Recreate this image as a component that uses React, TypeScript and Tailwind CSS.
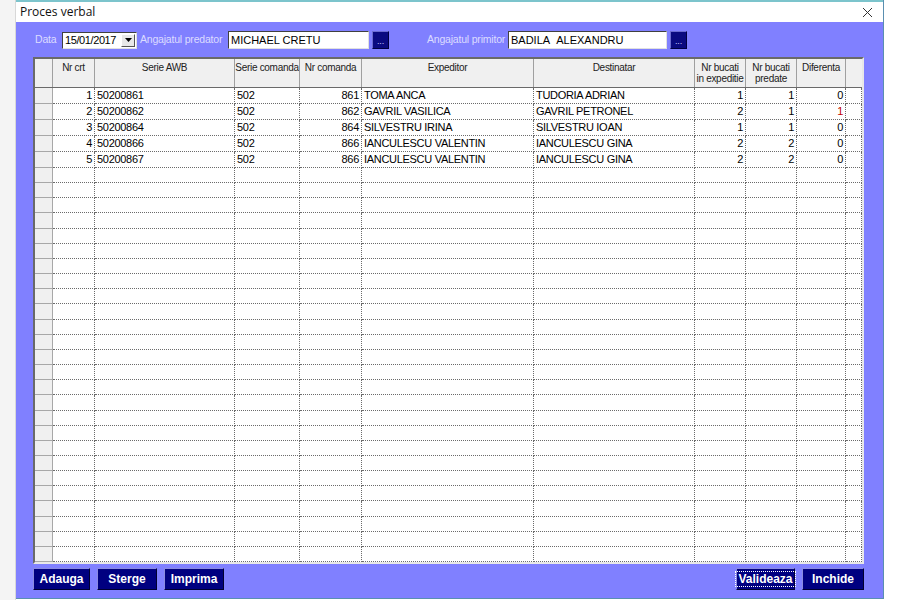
import React from "react";

type Row = {
  nr: number;
  awb: string;
  serie: string;
  cmd: string;
  exp: string;
  dest: string;
  bucExp: string;
  bucPred: string;
  dif: string;
};

const rows: Row[] = [
  { nr: 1, awb: "50200861", serie: "502", cmd: "861", exp: "TOMA ANCA", dest: "TUDORIA ADRIAN", bucExp: "1", bucPred: "1", dif: "0" },
  { nr: 2, awb: "50200862", serie: "502", cmd: "862", exp: "GAVRIL VASILICA", dest: "GAVRIL PETRONEL", bucExp: "2", bucPred: "1", dif: "1" },
  { nr: 3, awb: "50200864", serie: "502", cmd: "864", exp: "SILVESTRU IRINA", dest: "SILVESTRU IOAN", bucExp: "1", bucPred: "1", dif: "0" },
  { nr: 4, awb: "50200866", serie: "502", cmd: "866", exp: "IANCULESCU VALENTIN", dest: "IANCULESCU GINA", bucExp: "2", bucPred: "2", dif: "0" },
  { nr: 5, awb: "50200867", serie: "502", cmd: "866", exp: "IANCULESCU VALENTIN", dest: "IANCULESCU GINA", bucExp: "2", bucPred: "2", dif: "0" },
];

const TOTAL_ROWS = 31;

const cell =
  "h-full border-r border-b border-dotted border-[#6b6b6b] px-[2px] whitespace-nowrap overflow-hidden leading-[15px] tracking-[-0.3px]";

function HeaderCell({ w, children }: { w: string; children?: React.ReactNode }) {
  return (
    <div
      className={`${w} h-full shrink-0 overflow-hidden whitespace-nowrap border-r border-[#a0a0a0] bg-[#f0f0f0] pt-[3px] text-center text-[10px] leading-[11px] tracking-[-0.3px] text-[#222]`}
    >
      {children}
    </div>
  );
}

function DotsButton() {
  return (
    <div className="ml-[3px] flex h-[18px] w-[17px] items-end justify-center border border-t-[#6b6bd0] border-l-[#6b6bd0] border-r-[#000040] border-b-[#000040] bg-[#0a0a80] pb-[2px] text-[9px] leading-[9px] text-[#c8c8ff]">
      ...
    </div>
  );
}

function NavyButton({ label, w, focused }: { label: string; w: string; focused?: boolean }) {
  return (
    <div
      className={`${w} flex h-[22px] items-center justify-center border border-t-[#8a8ae0] border-l-[#8a8ae0] border-r-[#000030] border-b-[#000030] bg-[#000080] text-[12px] font-bold text-white`}
    >
      {focused ? (
        <span className="border border-dotted border-white px-[2px] leading-[14px]">{label}</span>
      ) : (
        label
      )}
    </div>
  );
}

export default function App() {
  const font = { fontFamily: '"Liberation Sans", Arial, sans-serif' };
  return (
    <div className="flex h-[600px] w-[900px] overflow-hidden bg-white" style={font}>
      {/* desktop edge behind the dialog */}
      <div className="h-full w-[16px] border-r border-[#d8d8d8] bg-[#f4f4f4]" />

      {/* dialog */}
      <div className="flex h-[599px] w-[868px] flex-col border-r border-b border-[#5a8fb0]">
        <div className="h-[2px] bg-[#7cc4cc]" />
        <div className="flex h-[20px] items-center justify-between bg-white pl-[4px] pr-[8px]">
          <span className="text-[12px] text-[#111]" style={{ fontFamily: '"Open Sans", "Noto Sans", sans-serif' }}>
            Proces verbal
          </span>
          <svg width="11" height="11" viewBox="0 0 11 11" className="mr-[2px]">
            <path d="M1 1 L10 10 M10 1 L1 10" stroke="#333" strokeWidth="1" />
          </svg>
        </div>

        <div className="flex flex-1 flex-col bg-[#8080ff] pl-[17px] pr-[19px]">
          {/* filter row */}
          <div className="mt-[9px] flex h-[18px] items-center whitespace-nowrap text-[10.5px] tracking-[-0.2px]">
            <span className="ml-[2px] w-[27px] text-[#dcdcff]">Data</span>
            <div className="flex h-[17px] w-[75px] items-center justify-between border border-t-[#404040] border-l-[#404040] border-r-[#e0e0e0] border-b-[#e0e0e0] bg-white pl-[2px] pr-[1px] text-[11px] tracking-[-0.4px] text-black">
              <span>15/01/2017</span>
              <div className="flex h-[13px] w-[14px] items-center justify-center border border-t-white border-l-white border-r-[#555] border-b-[#555] bg-[#e8e8e8]">
                <svg width="7" height="4" viewBox="0 0 7 4">
                  <path d="M0 0 H7 L3.5 4 Z" fill="#000" />
                </svg>
              </div>
            </div>
            <span className="ml-[3px] w-[88px] text-[#dcdcff]">Angajatul predator</span>
            <div className="h-[18px] w-[141px] border border-t-[#404040] border-l-[#404040] border-r-[#e0e0e0] border-b-[#e0e0e0] bg-white pl-[2px] text-[11px] leading-[16px] tracking-normal text-black">
              MICHAEL CRETU
            </div>
            <DotsButton />
            <span className="ml-[38px] w-[81px] text-[#dcdcff]">Angajatul primitor</span>
            <div className="h-[18px] w-[159px] border border-t-[#404040] border-l-[#404040] border-r-[#e0e0e0] border-b-[#e0e0e0] bg-white pl-[2px] text-[11px] leading-[16px] tracking-normal text-black">
              BADILA&nbsp;&nbsp;ALEXANDRU
            </div>
            <DotsButton />
          </div>

          {/* grid */}
          <div className="mt-[8px] flex h-[507px] flex-col border-2 border-t-[#6a6a6a] border-l-[#6a6a6a] border-r-[#e8e8e8] border-b-[#e8e8e8] bg-white text-[11px] text-black">
            <div className="flex h-[29px] shrink-0 border-b border-[#6a6a6a]">
              <HeaderCell w="w-[18px]" />
              <HeaderCell w="w-[42px]">Nr crt</HeaderCell>
              <HeaderCell w="w-[140px]">Serie AWB</HeaderCell>
              <HeaderCell w="w-[65px]">Serie comanda</HeaderCell>
              <HeaderCell w="w-[62px]">Nr comanda</HeaderCell>
              <HeaderCell w="w-[172px]">Expeditor</HeaderCell>
              <HeaderCell w="w-[161px]">Destinatar</HeaderCell>
              <HeaderCell w="w-[51px]">
                Nr bucati
                <br />
                in expeditie
              </HeaderCell>
              <HeaderCell w="w-[51px]">
                Nr bucati
                <br />
                predate
              </HeaderCell>
              <HeaderCell w="w-[49px]">Diferenta</HeaderCell>
              <div className="h-full flex-1 bg-[#f0f0f0]" />
            </div>
            <div className="flex flex-1 flex-col">
              {Array.from({ length: TOTAL_ROWS }).map((_, i) => {
                const r = rows[i];
                return (
                  <div key={i} className="flex flex-1">
                    <div className="h-full w-[18px] shrink-0 border-r border-b border-[#a8a8a8] bg-[#f0f0f0]" />
                    <div className={`${cell} w-[42px] shrink-0 text-right`}>{r ? r.nr : ""}</div>
                    <div className={`${cell} w-[140px] shrink-0`}>{r ? r.awb : ""}</div>
                    <div className={`${cell} w-[65px] shrink-0`}>{r ? r.serie : ""}</div>
                    <div className={`${cell} w-[62px] shrink-0 text-right`}>{r ? r.cmd : ""}</div>
                    <div className={`${cell} w-[172px] shrink-0`}>{r ? r.exp : ""}</div>
                    <div className={`${cell} w-[161px] shrink-0`}>{r ? r.dest : ""}</div>
                    <div className={`${cell} w-[51px] shrink-0 text-right`}>{r ? r.bucExp : ""}</div>
                    <div className={`${cell} w-[51px] shrink-0 text-right`}>{r ? r.bucPred : ""}</div>
                    <div className={`${cell} w-[49px] shrink-0 text-right ${r && r.dif !== "0" ? "text-[#c00000]" : ""}`}>
                      {r ? r.dif : ""}
                    </div>
                    <div className={`${cell} flex-1`} />
                  </div>
                );
              })}
            </div>
          </div>

          {/* actions */}
          <div className="mt-[4px] flex items-center justify-between">
            <div className="flex gap-[7px]">
              <NavyButton label="Adauga" w="w-[57px]" />
              <NavyButton label="Sterge" w="w-[60px]" />
              <NavyButton label="Imprima" w="w-[60px]" />
            </div>
            <div className="flex gap-[7px]">
              <NavyButton label="Valideaza" w="w-[59px]" focused />
              <NavyButton label="Inchide" w="w-[62px]" />
            </div>
          </div>
        </div>
      </div>
    </div>
  );
}
